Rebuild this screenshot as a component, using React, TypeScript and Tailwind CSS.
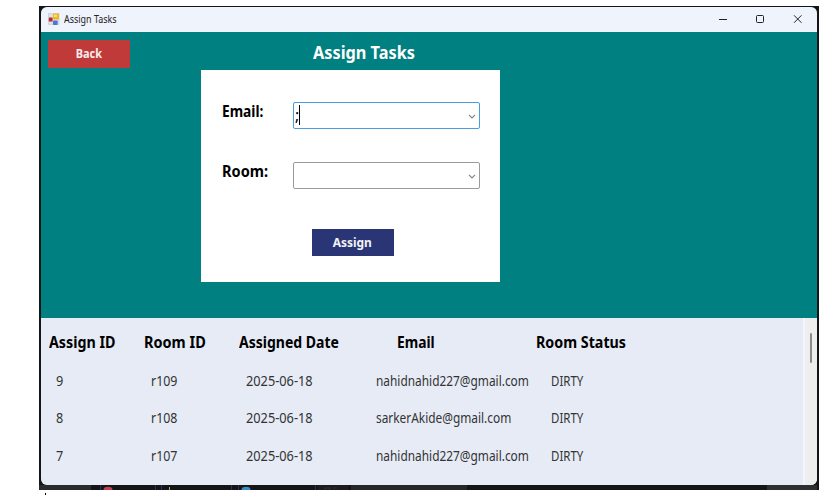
import React from "react";

const COLS = "grid grid-cols-[95px_95px_130px_175px_1fr]";

const rows = [
  { id: "9", room: "r109", date: "2025-06-18", email: "nahidnahid227@gmail.com", status: "DIRTY" },
  { id: "8", room: "r108", date: "2025-06-18", email: "sarkerAkide@gmail.com", status: "DIRTY" },
  { id: "7", room: "r107", date: "2025-06-18", email: "nahidnahid227@gmail.com", status: "DIRTY" },
];

function AppIcon() {
  return (
    <svg width="12" height="13" viewBox="0 0 12 13" className="shrink-0">
      <rect x="0.5" y="0.6" width="10.5" height="11" fill="#dde0e6" stroke="#c3c7cf" strokeWidth="0.6" />
      <rect x="0.8" y="4.6" width="3.8" height="3.8" rx="0.5" fill="#b52a2a" />
      <rect x="5" y="0.6" width="6" height="6" rx="0.9" fill="#ecb62a" />
      <rect x="6" y="1.6" width="3" height="2.4" fill="#fbdc74" />
      <rect x="5" y="7.4" width="4.6" height="4.6" rx="0.8" fill="#4a78cf" />
    </svg>
  );
}

/* The strip of desktop taskbar that shows below the window. */
function Taskbar() {
  return (
    <svg className="absolute bottom-0 left-0" width="780" height="5" viewBox="0 0 780 5">
      <rect x="0" y="0" width="52" height="5" fill="#2a2b2c" />
      <rect x="312" y="0" width="116" height="5" fill="#262728" />
      <rect x="728" y="0" width="50" height="5" fill="#2e2f30" />
      <g stroke="#332d5c">
        <path d="M61.5 0 V5 M116.5 0 V5 M122.5 0 V5 M192.5 0 V5 M199.5 0 V5 M276.5 0 V5" />
      </g>
      <ellipse cx="69" cy="5" rx="4.5" ry="3.2" fill="#c2404f" />
      <path d="M130.5 2 V5" stroke="#b8a878" />
      <ellipse cx="207" cy="5" rx="4.5" ry="3.2" fill="#3b8cc4" />
      <rect x="279" y="0" width="30" height="5" fill="#1c1c1d" />
      <path d="M286 5 V3 H291 V5 M294 3 H298" fill="none" stroke="#303031" />
    </svg>
  );
}

function Combo({ focused, value }: { focused?: boolean; value?: string }) {
  return (
    <div
      className={
        "ml-px flex h-[27px] w-[187px] items-center justify-between rounded-[2px] border bg-white pl-px pr-[3px] " +
        (focused ? "border-[#4a9be0]" : "border-[#9b9b9b]")
      }
    >
      <div className="flex items-center pb-px">
        <span className="text-[16px] leading-5 text-black">{value}</span>
        {focused && <span className="h-[20px] w-px bg-black" />}
      </div>
      <svg width="8" height="5" viewBox="0 0 8 5" className="mt-px" fill="none" stroke="#858585" strokeWidth="1.2">
        <path d="M1 0.8 L4 3.8 L7 0.8" />
      </svg>
    </div>
  );
}

export default function App() {
  return (
    <div className="relative h-[495px] w-[832px] overflow-hidden bg-white pl-[39px] pt-[6px] font-['Noto_Sans',sans-serif]">
      <div className="absolute left-[45px] top-[493px] h-[2px] w-px bg-black" />
      <div className="relative h-[484px] w-[780px] bg-[#141516] pl-[2px] pt-px">
        <Taskbar />
        <div className="flex h-[478px] w-[776px] flex-col overflow-hidden rounded-[6px] bg-[#008080]">
          <header className="flex h-[25px] shrink-0 items-center bg-[#eff3fb] pb-px pl-[7px]">
            <AppIcon />
            <span className="ml-[4px] origin-left scale-x-[0.85] whitespace-nowrap text-[10.5px] leading-4 text-[#222]">Assign Tasks</span>
            <svg className="ml-auto mr-[14px]" width="84" height="10" viewBox="0 0 84 10" fill="none" stroke="#222">
              <path d="M0 5.5 H8" />
              <rect x="37.5" y="1.5" width="7" height="7" rx="1" />
              <path d="M75 1.3 L82.5 8.8 M82.5 1.3 L75 8.8" />
            </svg>
          </header>

          <section className="flex h-[286px] shrink-0 items-start pl-[7px]">
            <button className="mt-[8px] flex h-[28px] w-[82px] items-center justify-center bg-[#c13a3a] text-[11.5px] font-bold text-[#f7eded]">
              <span className="-ml-px scale-x-[0.95]">Back</span>
            </button>
            <div className="ml-[71px] w-[299px]">
              <h1 className="flex h-[38px] items-center pl-[112px] pt-[2px] text-[18px] font-bold leading-6 text-white">
                <span className="origin-left scale-x-[0.905] whitespace-nowrap">Assign Tasks</span>
              </h1>
              <div className="flex h-[212px] flex-col bg-white pl-[20px] pt-[32px]">
                <div className="flex">
                  <label className="w-[71px] text-[16px] font-bold leading-[18px] text-black">
                    <span className="ml-px inline-block origin-left scale-x-[0.86]">Email:</span>
                  </label>
                  <Combo focused value=";" />
                </div>
                <div className="mt-[33px] flex">
                  <label className="w-[71px] text-[16px] font-bold leading-[18px] text-black">
                    <span className="ml-px inline-block origin-left scale-x-[0.91]">Room:</span>
                  </label>
                  <Combo />
                </div>
                <button className="ml-[91px] mt-[40px] flex h-[27px] w-[82px] items-center justify-center bg-[#2a3575] pt-px text-[13px] font-bold text-[#f2f2f6]">
                  <span className="-ml-px scale-x-[0.92]">Assign</span>
                </button>
              </div>
            </div>
          </section>

          <section className="flex min-h-0 flex-1 bg-[#e6ebf6]">
            <div className="flex-1">
              <div className={COLS + " h-[44px] items-end pb-[9px] pl-[8px] text-[15.5px] font-bold leading-[22px] text-black whitespace-nowrap"}>
                <span className="origin-left justify-self-start scale-x-[0.92]">Assign ID</span>
                <span className="origin-left justify-self-start scale-x-[0.935]">Room ID</span>
                <span className="origin-left justify-self-start scale-x-[0.905]">Assigned Date</span>
                <span className="ml-[28px] origin-left justify-self-start scale-x-[0.89]">Email</span>
                <span className="-ml-[8px] origin-left justify-self-start scale-x-[0.92]">Room Status</span>
              </div>
              {rows.map((r) => (
                <div
                  key={r.id}
                  className={COLS + " h-[37.6px] items-center pl-[15px] text-[13.5px] leading-5 text-[#333] whitespace-nowrap"}
                >
                  <span className="origin-left justify-self-start scale-x-[0.94]">{r.id}</span>
                  <span className="origin-left justify-self-start scale-x-[0.92]">{r.room}</span>
                  <span className="origin-left justify-self-start scale-x-[0.945]">{r.date}</span>
                  <span className="origin-left justify-self-start scale-x-[0.88]">{r.email}</span>
                  <span className="origin-left justify-self-start scale-x-[0.85]">{r.status}</span>
                </div>
              ))}
            </div>
            <div className="w-[14px] border-l-2 border-[#f3f6fb] bg-[#eeeeee] pl-[5px] pt-[15px]">
              <div className="h-[30px] w-[2px] rounded-full bg-[#8b8b8b]" />
            </div>
          </section>
        </div>
      </div>
    </div>
  );
}
